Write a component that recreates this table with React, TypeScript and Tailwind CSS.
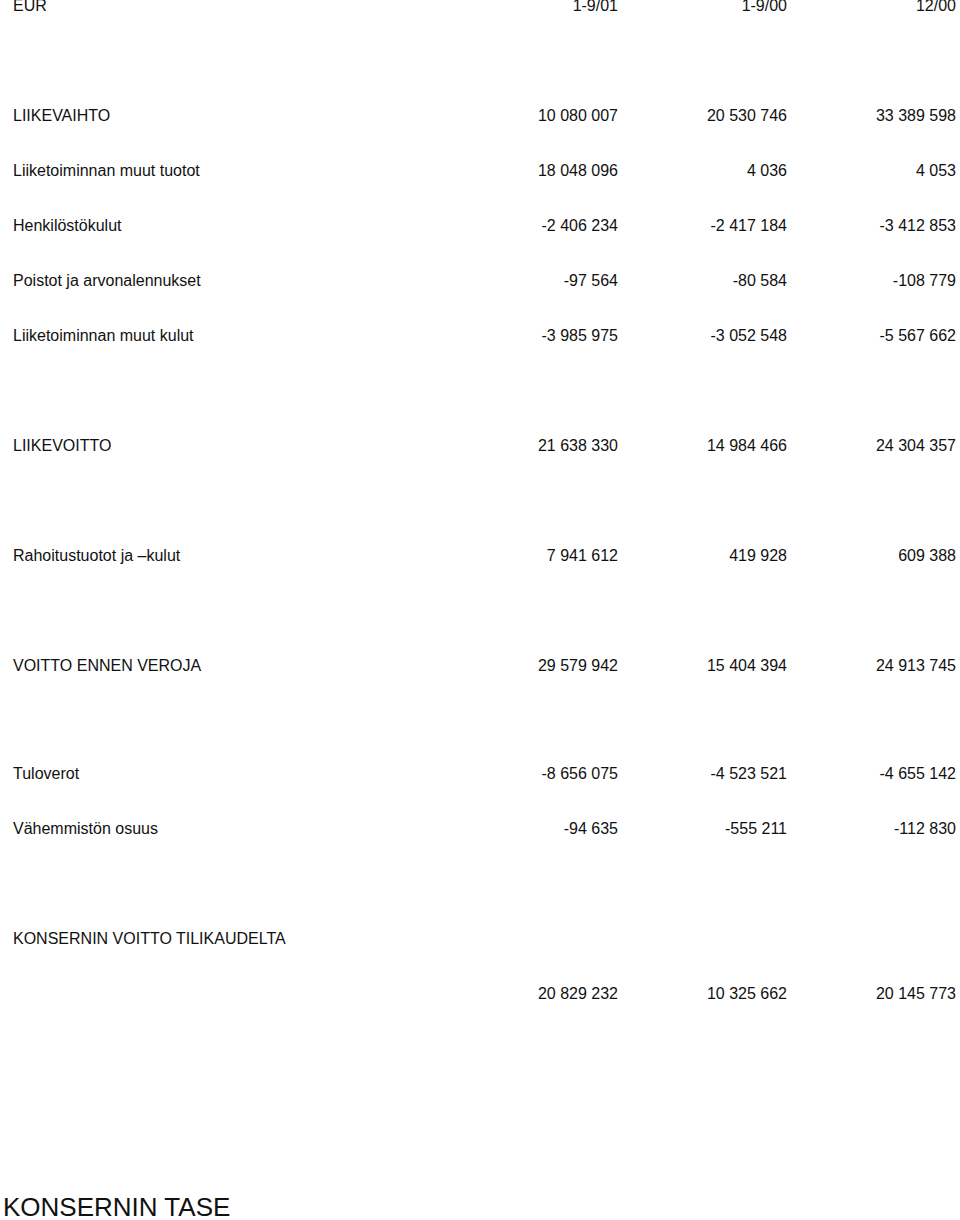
const rows: (string[] | number)[] = [
  ["EUR", "1-9/01", "1-9/00", "12/00"],
  55,
  ["LIIKEVAIHTO", "10 080 007", "20 530 746", "33 389 598"],
  ["Liiketoiminnan muut tuotot", "18 048 096", "4 036", "4 053"],
  ["Henkilöstökulut", "-2 406 234", "-2 417 184", "-3 412 853"],
  ["Poistot ja arvonalennukset", "-97 564", "-80 584", "-108 779"],
  ["Liiketoiminnan muut kulut", "-3 985 975", "-3 052 548", "-5 567 662"],
  55,
  ["LIIKEVOITTO", "21 638 330", "14 984 466", "24 304 357"],
  55,
  ["Rahoitustuotot ja –kulut", "7 941 612", "419 928", "609 388"],
  55,
  ["VOITTO ENNEN VEROJA", "29 579 942", "15 404 394", "24 913 745"],
  53,
  ["Tuloverot", "-8 656 075", "-4 523 521", "-4 655 142"],
  ["Vähemmistön osuus", "-94 635", "-555 211", "-112 830"],
  55,
  ["KONSERNIN VOITTO TILIKAUDELTA", "", "", ""],
  ["", "20 829 232", "10 325 662", "20 145 773"],
];

export default function App() {
  return (
    <div
      className="w-[960px] h-[1220px] overflow-hidden bg-white text-[#111]"
      style={{ fontFamily: '"Liberation Sans", Arial, sans-serif' }}
    >
      <div className="-mt-[22px]">
        {rows.map((r, i) =>
          typeof r === "number" ? (
            <div key={i} className={r === 53 ? "h-[53px]" : "h-[55px]"} />
          ) : (
            <div key={i} className="flex h-[55px] items-center text-[16px] pr-[4px]">
              <div className="flex-1 pl-[13px] whitespace-nowrap">{r[0]}</div>
              <div className="w-[160px] text-right">{r[1]}</div>
              <div className="w-[169px] text-right">{r[2]}</div>
              <div className="w-[169px] text-right">{r[3]}</div>
            </div>
          )
        )}
      </div>
      <div className="mt-[173px] pl-[3px] text-[26px] leading-none">KONSERNIN TASE</div>
    </div>
  );
}
